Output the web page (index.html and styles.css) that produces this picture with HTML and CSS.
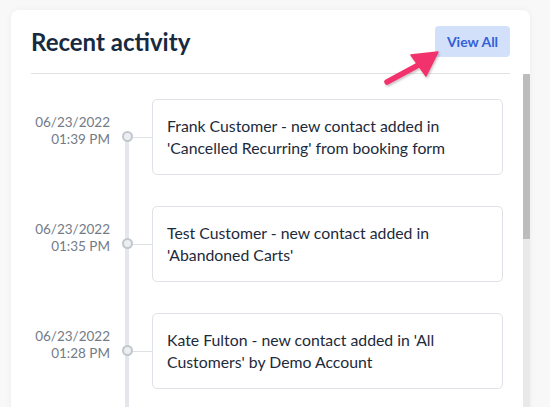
FILE: index.html
```html
<!DOCTYPE html>
<html>
<head>
<meta charset="utf-8">
<link rel="stylesheet" href="styles.css">
</head>
<body>
<div class="card">
  <div class="header">
    <h2 class="title">Recent activity</h2>
    <button class="view-all">View All</button>
  </div>
  <svg class="arrow" width="70" height="45" viewBox="0 0 70 45" aria-hidden="true">
    <defs>
      <filter id="sh" x="-20%" y="-20%" width="140%" height="140%">
        <feDropShadow dx="1" dy="1.5" stdDeviation="1" flood-color="#000" flood-opacity="0.25"/>
      </filter>
    </defs>
    <g filter="url(#sh)">
      <line x1="7" y1="38" x2="44" y2="18" stroke="#f2336c" stroke-width="5.5" stroke-linecap="round"/>
      <polygon points="58,8 31,11 46,32" fill="#f2336c" stroke="#f2336c" stroke-width="1.5" stroke-linejoin="round"/>
    </g>
  </svg>
  <div class="scroll">
    <div class="list">
      <div class="row first">
        <div class="date">06/23/2022<br>01:39 PM</div>
        <div class="track"><span class="dot"></span></div>
        <div class="item">Frank Customer - new contact added in 'Cancelled Recurring' from booking form</div>
      </div>
      <div class="row">
        <div class="date">06/23/2022<br>01:35 PM</div>
        <div class="track"><span class="dot"></span></div>
        <div class="item">Test Customer - new contact added in 'Abandoned Carts'</div>
      </div>
      <div class="row last">
        <div class="date">06/23/2022<br>01:28 PM</div>
        <div class="track"><span class="dot"></span></div>
        <div class="item">Kate Fulton - new contact added in 'All Customers' by Demo Account</div>
      </div>
    </div>
    <div class="scrollbar"><div class="thumb"></div></div>
  </div>
</div>
</body>
</html>
```

FILE: styles.css
```css
html, body {
  margin: 0;
  padding: 0;
  overflow: hidden;
  height: 100%;
}
body {
  background: #f8f8f9;
  font-family: Lato, "Open Sans", sans-serif;
}
.card {
  position: relative;
  margin: 10px 0 0 11px;
  width: 519px;
  background: #ffffff;
  border-radius: 8px;
  box-shadow: 0 0 6px rgba(0, 0, 0, 0.05);
}
.header {
  margin: 0 20px;
  padding: 16px 0;
  display: flex;
  align-items: center;
  justify-content: space-between;
  border-bottom: 1px solid #e2e2e4;
}
.title {
  margin: 0;
  font-size: 24px;
  line-height: 28px;
  font-weight: 700;
  color: #172a40;
}
.view-all {
  height: 31px;
  width: 75px;
  padding: 0;
  border: none;
  border-radius: 4px;
  background: #d3e0fa;
  color: #3360d6;
  font-family: Lato, "Open Sans", sans-serif;
  font-size: 14px;
  font-weight: 700;
}
.arrow {
  position: absolute;
  left: 369px;
  top: 34px;
}
.scroll {
  display: flex;
  height: 346px;
  overflow: hidden;
}
.list {
  flex: 1;
  padding: 25px 20px 0 20px;
}
.scrollbar {
  width: 7px;
  flex: none;
  background: #e9e9e9;
}
.thumb {
  height: 165px;
  background: #bcbcbc;
  border-radius: 1px 1px 0 0;
}
.row {
  display: grid;
  grid-template-columns: 80px 41px 1fr;
  padding-bottom: 31px;
}
.date {
  padding-top: 15px;
  padding-right: 1px;
  text-align: right;
  font-size: 13.5px;
  line-height: 17px;
  color: #737b86;
}
.track {
  position: relative;
}
.track::before {
  content: "";
  position: absolute;
  left: 14px;
  width: 4px;
  top: 0;
  bottom: -31px;
  background: #e3e6ea;
}
.row.first .track::before {
  top: 38px;
}
.row.last .track::before {
  bottom: -80px;
}
.track::after {
  content: "";
  position: absolute;
  left: 21px;
  right: 0;
  top: 38px;
  height: 1px;
  background: #dde0e4;
}
.dot {
  position: absolute;
  left: 11px;
  top: 32px;
  width: 7px;
  height: 7px;
  border: 2px solid #c2c7ce;
  border-radius: 50%;
  background: #eceef1;
  z-index: 1;
}
.item {
  border: 1px solid #dfe2e6;
  border-radius: 5px;
  padding: 15px 14px;
  font-size: 15.8px;
  line-height: 22px;
  color: #1d2a3b;
  height: 44px;
  overflow: hidden;
}
```
